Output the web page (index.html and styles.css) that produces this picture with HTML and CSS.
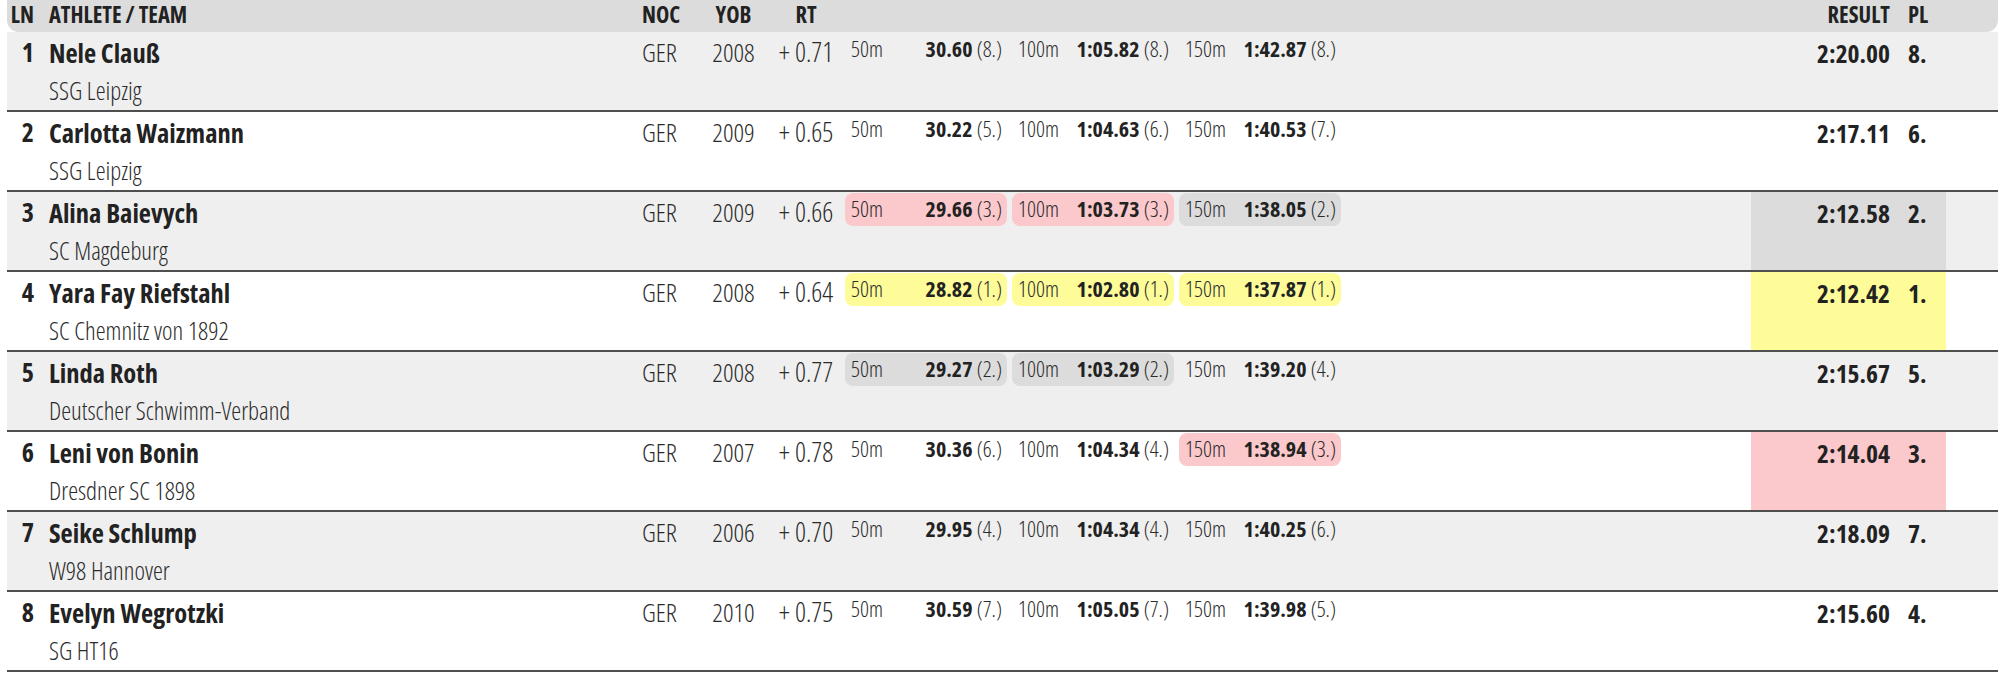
FILE: index.html
```html
<!DOCTYPE html>
<html lang="de">
<head>
<meta charset="utf-8">
<title>Results</title>
<link rel="stylesheet" href="styles.css">
</head>
<body>
<div class="results">
  <div class="row head">
    <div class="c ln">LN</div>
    <div class="c ath">ATHLETE / TEAM</div>
    <div class="c noc">NOC</div>
    <div class="c yob">YOB</div>
    <div class="c rt">RT</div>
    <div class="c splits"></div>
    <div class="c gap"></div>
    <div class="c res">RESULT</div>
    <div class="c pl">PL</div>
    <div class="c end"></div>
  </div>

  <div class="row odd">
    <div class="c ln">1</div>
    <div class="c ath"><div class="name">Nele Clauß</div><div class="team">SSG Leipzig</div></div>
    <div class="c noc">GER</div>
    <div class="c yob">2008</div>
    <div class="c rt">+ 0.71</div>
    <div class="c splits">
      <div class="split"><span class="lab">50m</span><span class="val"><b>30.60</b> (8.)</span></div>
      <div class="split"><span class="lab">100m</span><span class="val"><b>1:05.82</b> (8.)</span></div>
      <div class="split"><span class="lab">150m</span><span class="val"><b>1:42.87</b> (8.)</span></div>
    </div>
    <div class="c gap"></div>
    <div class="c res">2:20.00</div>
    <div class="c pl">8.</div>
    <div class="c end"></div>
  </div>

  <div class="row">
    <div class="c ln">2</div>
    <div class="c ath"><div class="name">Carlotta Waizmann</div><div class="team">SSG Leipzig</div></div>
    <div class="c noc">GER</div>
    <div class="c yob">2009</div>
    <div class="c rt">+ 0.65</div>
    <div class="c splits">
      <div class="split"><span class="lab">50m</span><span class="val"><b>30.22</b> (5.)</span></div>
      <div class="split"><span class="lab">100m</span><span class="val"><b>1:04.63</b> (6.)</span></div>
      <div class="split"><span class="lab">150m</span><span class="val"><b>1:40.53</b> (7.)</span></div>
    </div>
    <div class="c gap"></div>
    <div class="c res">2:17.11</div>
    <div class="c pl">6.</div>
    <div class="c end"></div>
  </div>

  <div class="row odd">
    <div class="c ln">3</div>
    <div class="c ath"><div class="name">Alina Baievych</div><div class="team">SC Magdeburg</div></div>
    <div class="c noc">GER</div>
    <div class="c yob">2009</div>
    <div class="c rt">+ 0.66</div>
    <div class="c splits">
      <div class="split bronze"><span class="lab">50m</span><span class="val"><b>29.66</b> (3.)</span></div>
      <div class="split bronze"><span class="lab">100m</span><span class="val"><b>1:03.73</b> (3.)</span></div>
      <div class="split silver"><span class="lab">150m</span><span class="val"><b>1:38.05</b> (2.)</span></div>
    </div>
    <div class="c gap"></div>
    <div class="c res silver">2:12.58</div>
    <div class="c pl silver">2.</div>
    <div class="c end"></div>
  </div>

  <div class="row">
    <div class="c ln">4</div>
    <div class="c ath"><div class="name">Yara Fay Riefstahl</div><div class="team">SC Chemnitz von 1892</div></div>
    <div class="c noc">GER</div>
    <div class="c yob">2008</div>
    <div class="c rt">+ 0.64</div>
    <div class="c splits">
      <div class="split gold"><span class="lab">50m</span><span class="val"><b>28.82</b> (1.)</span></div>
      <div class="split gold"><span class="lab">100m</span><span class="val"><b>1:02.80</b> (1.)</span></div>
      <div class="split gold"><span class="lab">150m</span><span class="val"><b>1:37.87</b> (1.)</span></div>
    </div>
    <div class="c gap"></div>
    <div class="c res gold">2:12.42</div>
    <div class="c pl gold">1.</div>
    <div class="c end"></div>
  </div>

  <div class="row odd">
    <div class="c ln">5</div>
    <div class="c ath"><div class="name">Linda Roth</div><div class="team">Deutscher Schwimm-Verband</div></div>
    <div class="c noc">GER</div>
    <div class="c yob">2008</div>
    <div class="c rt">+ 0.77</div>
    <div class="c splits">
      <div class="split silver"><span class="lab">50m</span><span class="val"><b>29.27</b> (2.)</span></div>
      <div class="split silver"><span class="lab">100m</span><span class="val"><b>1:03.29</b> (2.)</span></div>
      <div class="split"><span class="lab">150m</span><span class="val"><b>1:39.20</b> (4.)</span></div>
    </div>
    <div class="c gap"></div>
    <div class="c res">2:15.67</div>
    <div class="c pl">5.</div>
    <div class="c end"></div>
  </div>

  <div class="row">
    <div class="c ln">6</div>
    <div class="c ath"><div class="name">Leni von Bonin</div><div class="team">Dresdner SC 1898</div></div>
    <div class="c noc">GER</div>
    <div class="c yob">2007</div>
    <div class="c rt">+ 0.78</div>
    <div class="c splits">
      <div class="split"><span class="lab">50m</span><span class="val"><b>30.36</b> (6.)</span></div>
      <div class="split"><span class="lab">100m</span><span class="val"><b>1:04.34</b> (4.)</span></div>
      <div class="split bronze"><span class="lab">150m</span><span class="val"><b>1:38.94</b> (3.)</span></div>
    </div>
    <div class="c gap"></div>
    <div class="c res bronze">2:14.04</div>
    <div class="c pl bronze">3.</div>
    <div class="c end"></div>
  </div>

  <div class="row odd">
    <div class="c ln">7</div>
    <div class="c ath"><div class="name">Seike Schlump</div><div class="team">W98 Hannover</div></div>
    <div class="c noc">GER</div>
    <div class="c yob">2006</div>
    <div class="c rt">+ 0.70</div>
    <div class="c splits">
      <div class="split"><span class="lab">50m</span><span class="val"><b>29.95</b> (4.)</span></div>
      <div class="split"><span class="lab">100m</span><span class="val"><b>1:04.34</b> (4.)</span></div>
      <div class="split"><span class="lab">150m</span><span class="val"><b>1:40.25</b> (6.)</span></div>
    </div>
    <div class="c gap"></div>
    <div class="c res">2:18.09</div>
    <div class="c pl">7.</div>
    <div class="c end"></div>
  </div>

  <div class="row">
    <div class="c ln">8</div>
    <div class="c ath"><div class="name">Evelyn Wegrotzki</div><div class="team">SG HT16</div></div>
    <div class="c noc">GER</div>
    <div class="c yob">2010</div>
    <div class="c rt">+ 0.75</div>
    <div class="c splits">
      <div class="split"><span class="lab">50m</span><span class="val"><b>30.59</b> (7.)</span></div>
      <div class="split"><span class="lab">100m</span><span class="val"><b>1:05.05</b> (7.)</span></div>
      <div class="split"><span class="lab">150m</span><span class="val"><b>1:39.98</b> (5.)</span></div>
    </div>
    <div class="c gap"></div>
    <div class="c res">2:15.60</div>
    <div class="c pl">4.</div>
    <div class="c end"></div>
  </div>
</div>
</body>
</html>
```
FILE: styles.css
```css
html, body {
  margin: 0;
  padding: 0;
  background: #ffffff;
}
body {
  font-family: "Open Sans", "Noto Sans", sans-serif;
  font-stretch: 75%;
  font-weight: 300;
  color: #2b2b2b;
}
.results {
  padding: 0 2px 0 7px;
}
.row {
  display: grid;
  grid-template-columns: 34px 599px 60px 67px 78px 500px 1fr 149px 46px 52px;
  height: 78px;
  border-bottom: 2px solid #4f4f4f;
  background: #ffffff;
}
.row.odd {
  background: #efefef;
}
.row.head {
  height: 32px;
  border-bottom: 0;
  background: #dcdcdc;
  border-radius: 0 0 12px 12px;
}
.c {
  padding-top: 1px;
  font-size: 26px;
  line-height: 38px;
  white-space: nowrap;
}
.head .c {
  padding-top: 0;
  font-size: 22.5px;
  line-height: 30px;
  font-weight: 700;
  color: #222;
}
.ln {
  text-align: right;
  padding-right: 7px;
  font-weight: 700;
  color: #222;
}
.ath {
  padding-top: 2px;
  padding-left: 8px;
}
.name {
  font-size: 26.5px;
  line-height: 38px;
  font-weight: 700;
  color: #222;
}
.team {
  font-size: 25px;
  line-height: 37px;
}
.noc {
  padding-left: 2px;
}
.yob, .rt {
  text-align: center;
}
.rt {
  font-size: 27px;
}
.splits {
  padding-top: 1px;
  display: flex;
  gap: 5px;
  align-items: flex-start;
}
.split {
  width: 162px;
  height: 33px;
  box-sizing: border-box;
  padding: 0 5px 0 6px;
  border-radius: 8px;
  display: flex;
  justify-content: space-between;
  font-size: 22px;
  line-height: 30px;
  color: #2b2b2b;
}
.val {
  font-stretch: 80%;
}
.split b {
  font-weight: 700;
  color: #222;
}
.res {
  text-align: right;
  padding-right: 10px;
  padding-top: 2px;
  font-size: 25.5px;
  font-weight: 700;
  color: #222;
}
.pl {
  padding-left: 8px;
  padding-top: 2px;
  font-size: 25.5px;
  font-weight: 700;
  color: #222;
}
.head .res, .head .pl {
  padding-top: 0;
}
.gold {
  background: #fdfc99;
}
.silver {
  background: #dcdcdc;
}
.bronze {
  background: #fbc8cb;
}
```
